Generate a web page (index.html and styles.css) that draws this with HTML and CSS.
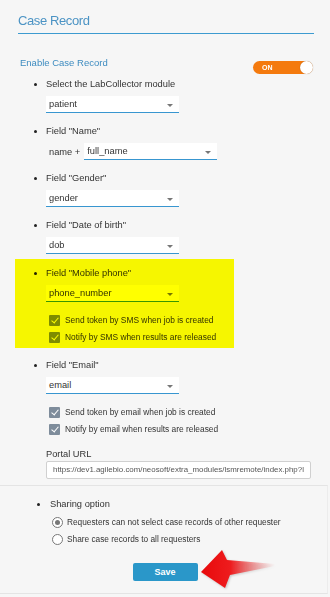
FILE: index.html
```html
<!DOCTYPE html>
<html lang="en">
  <head>
    <title>Case Record</title>
    <link rel="stylesheet" href="styles.css">
  </head>
  <body>
    <div class="settings">
      <h2 class="section-title">Case Record</h2>

      <div class="enable-row">
        <span class="enable-label">Enable Case Record</span>
        <span class="toggle"><span class="toggle-text">ON</span><span class="toggle-knob"></span></span>
      </div>

      <div class="item first">
        <span class="dot"></span>
        <div class="item-body">
          <div class="item-label">Select the LabCollector module</div>
          <div class="select">patient<span class="caret"></span></div>
        </div>
      </div>

      <div class="item">
        <span class="dot"></span>
        <div class="item-body">
          <div class="item-label">Field "Name"</div>
          <div class="name-row">
            <span class="prefix">name +</span>
            <div class="select">full_name<span class="caret"></span></div>
          </div>
        </div>
      </div>

      <div class="item">
        <span class="dot"></span>
        <div class="item-body">
          <div class="item-label">Field "Gender"</div>
          <div class="select">gender<span class="caret"></span></div>
        </div>
      </div>

      <div class="item">
        <span class="dot"></span>
        <div class="item-body">
          <div class="item-label">Field "Date of birth"</div>
          <div class="select">dob<span class="caret"></span></div>
        </div>
      </div>

      <div class="highlight">
        <div class="item">
          <span class="dot"></span>
          <div class="item-body">
            <div class="item-label">Field "Mobile phone"</div>
            <div class="select">phone_number<span class="caret"></span></div>
            <div class="checks">
              <label class="check"><span class="box"></span>Send token by SMS when job is created</label>
              <label class="check"><span class="box"></span>Notify by SMS when results are released</label>
            </div>
          </div>
        </div>
      </div>

      <div class="item email-item">
        <span class="dot"></span>
        <div class="item-body">
          <div class="item-label">Field "Email"</div>
          <div class="select">email<span class="caret"></span></div>
          <div class="checks">
            <label class="check"><span class="box"></span>Send token by email when job is created</label>
            <label class="check"><span class="box"></span>Notify by email when results are released</label>
          </div>
          <div class="portal-label">Portal URL</div>
          <div class="url-input">https://dev1.agilebio.com/neosoft/extra_modules/lsmremote/index.php?l</div>
        </div>
      </div>
    </div>

    <div class="sharing">
      <div class="item sharing-item">
        <span class="dot"></span>
        <div class="item-body">
          <div class="item-label">Sharing option</div>
          <div class="radios">
            <label class="radio"><span class="circle checked"></span>Requesters can not select case records of other requester</label>
            <label class="radio"><span class="circle"></span>Share case records to all requesters</label>
          </div>
        </div>
      </div>

      <div class="actions">
        <div class="save-wrap">
          <button class="save-btn" type="button">Save</button>
          <svg class="arrow" width="80" height="44" viewBox="0 0 80 44">
            <defs>
              <linearGradient id="arrow-fill" x1="0" y1="0" x2="1" y2="0">
                <stop offset="0" stop-color="#e8090b" />
                <stop offset="0.4" stop-color="#ee1c1e" />
                <stop offset="1" stop-color="#f46a6a" stop-opacity="0" />
              </linearGradient>
            </defs>
            <polygon points="2,23 23,1 28,11 76,15 76,17 31,26 26,39" fill="url(#arrow-fill)" />
          </svg>
        </div>
      </div>
    </div>
  </body>
</html>
```

FILE: styles.css
```css
body {
  margin: 0;
  background-color: #f6f6f6;
  font-family: "Liberation Sans", Arial, sans-serif;
  font-size: 9.3px;
  color: #333;
}

.settings {
  padding: 12px 16px 6px 18px;
}

.section-title {
  margin: 0;
  padding-bottom: 3px;
  border-bottom: 1px solid #3d9bd0;
  font-size: 13px;
  font-weight: normal;
  letter-spacing: -0.4px;
  line-height: 18px;
  color: #4b93c4;
}

.enable-row {
  display: flex;
  justify-content: space-between;
  align-items: flex-start;
  margin-top: 22px;
  padding-left: 2px;
}

.enable-label {
  color: #3e8cc0;
  font-size: 9.5px;
  line-height: 14px;
}

.toggle {
  position: relative;
  display: flex;
  align-items: center;
  width: 60px;
  height: 13px;
  margin-top: 5px;
  margin-right: 1px;
  border-radius: 7px;
  background-color: #f47a0e;
}

.toggle-text {
  margin-left: 9px;
  font-size: 7px;
  font-weight: bold;
  color: #fff;
}

.toggle-knob {
  position: absolute;
  right: 0;
  top: 0;
  width: 13px;
  height: 13px;
  border-radius: 50%;
  background-color: #fff;
  box-shadow: 0 0 1px rgba(0, 0, 0, 0.35);
}

.item {
  display: flex;
  padding-left: 16px;
  margin-top: 11px;
}

.item.first {
  margin-top: 3px;
}

.dot {
  flex: none;
  width: 3px;
  height: 3px;
  margin-top: 6px;
  margin-right: 9px;
  border-radius: 50%;
  background-color: #222;
}

.item-body {
  display: flex;
  flex-direction: column;
  align-items: flex-start;
}

.item-label {
  line-height: 14px;
}

.select {
  position: relative;
  box-sizing: border-box;
  width: 133px;
  height: 17px;
  margin-top: 5px;
  padding-left: 3px;
  line-height: 16px;
  background-color: #fff;
  border-bottom: 1px solid #3896d0;
}

.caret {
  position: absolute;
  right: 6px;
  top: 8px;
  border-left: 3px solid transparent;
  border-right: 3px solid transparent;
  border-top: 3px solid #777;
}

.name-row {
  display: flex;
  align-items: center;
  gap: 4px;
  margin-top: 5px;
}

.name-row .select {
  margin-top: 0;
}

.prefix {
  padding-left: 3px;
}

.highlight {
  position: relative;
  margin: 5px 80px 0 -3px;
  padding: 0 0 4px 0;
}

.highlight::after {
  content: "";
  position: absolute;
  inset: 0;
  background-color: #ffff00;
  mix-blend-mode: multiply;
  pointer-events: none;
}

.highlight .item {
  margin-top: 0;
  padding-top: 7px;
  padding-left: 19px;
}

.email-item {
  margin-top: 10px;
}

.checks {
  display: flex;
  flex-direction: column;
  gap: 4px;
  margin-top: 12px;
  padding-left: 3px;
}

.check {
  display: flex;
  align-items: center;
  gap: 5px;
  font-size: 8.4px;
  line-height: 13px;
}

.box {
  position: relative;
  width: 11px;
  height: 11px;
  border-radius: 1px;
  background-color: #7e8c9b;
}

.box::after {
  content: "";
  position: absolute;
  left: 4px;
  top: 1px;
  width: 3px;
  height: 6px;
  border-right: 1px solid #fff;
  border-bottom: 1px solid #fff;
  transform: rotate(40deg);
}

.portal-label {
  margin-top: 12px;
  line-height: 12px;
}

.url-input {
  box-sizing: border-box;
  width: 265px;
  height: 18px;
  margin-top: 1px;
  padding: 0 6px;
  line-height: 16px;
  font-size: 7.9px;
  color: #555;
  white-space: nowrap;
  overflow: hidden;
  background-color: #fff;
  border: 1px solid #d0d0d0;
  border-radius: 2px;
}

.sharing {
  margin-right: 2px;
  border-top: 1px solid #e4e4e4;
  border-right: 1px solid #ececec;
  border-bottom: 1px solid #e4e4e4;
  padding-bottom: 12px;
}

.sharing-item {
  padding-left: 37px;
  margin-top: 11px;
}

.sharing-item .dot {
  margin-right: 10px;
}

.radios {
  display: flex;
  flex-direction: column;
  gap: 4px;
  margin-top: 5px;
  padding-left: 2px;
}

.radio {
  display: flex;
  align-items: center;
  gap: 4px;
  font-size: 8.3px;
  line-height: 13px;
}

.circle {
  position: relative;
  box-sizing: border-box;
  width: 11px;
  height: 11px;
  border-radius: 50%;
  border: 1px solid #777;
  background-color: #fff;
}

.circle.checked::after {
  content: "";
  position: absolute;
  left: 2px;
  top: 2px;
  width: 5px;
  height: 5px;
  border-radius: 50%;
  background-color: #777;
}

.actions {
  display: flex;
  justify-content: center;
  margin-top: 17px;
  padding-left: 3px;
}

.save-wrap {
  position: relative;
}

.save-btn {
  display: block;
  width: 65px;
  height: 18px;
  padding: 0;
  border: none;
  border-radius: 2px;
  background-color: #2a97c9;
  color: #fff;
  font-family: "Liberation Sans", Arial, sans-serif;
  font-size: 9px;
  font-weight: bold;
}

.arrow {
  position: absolute;
  left: 66px;
  top: -14px;
  filter: drop-shadow(1px 1px 1px rgba(0, 0, 0, 0.2));
}
```
